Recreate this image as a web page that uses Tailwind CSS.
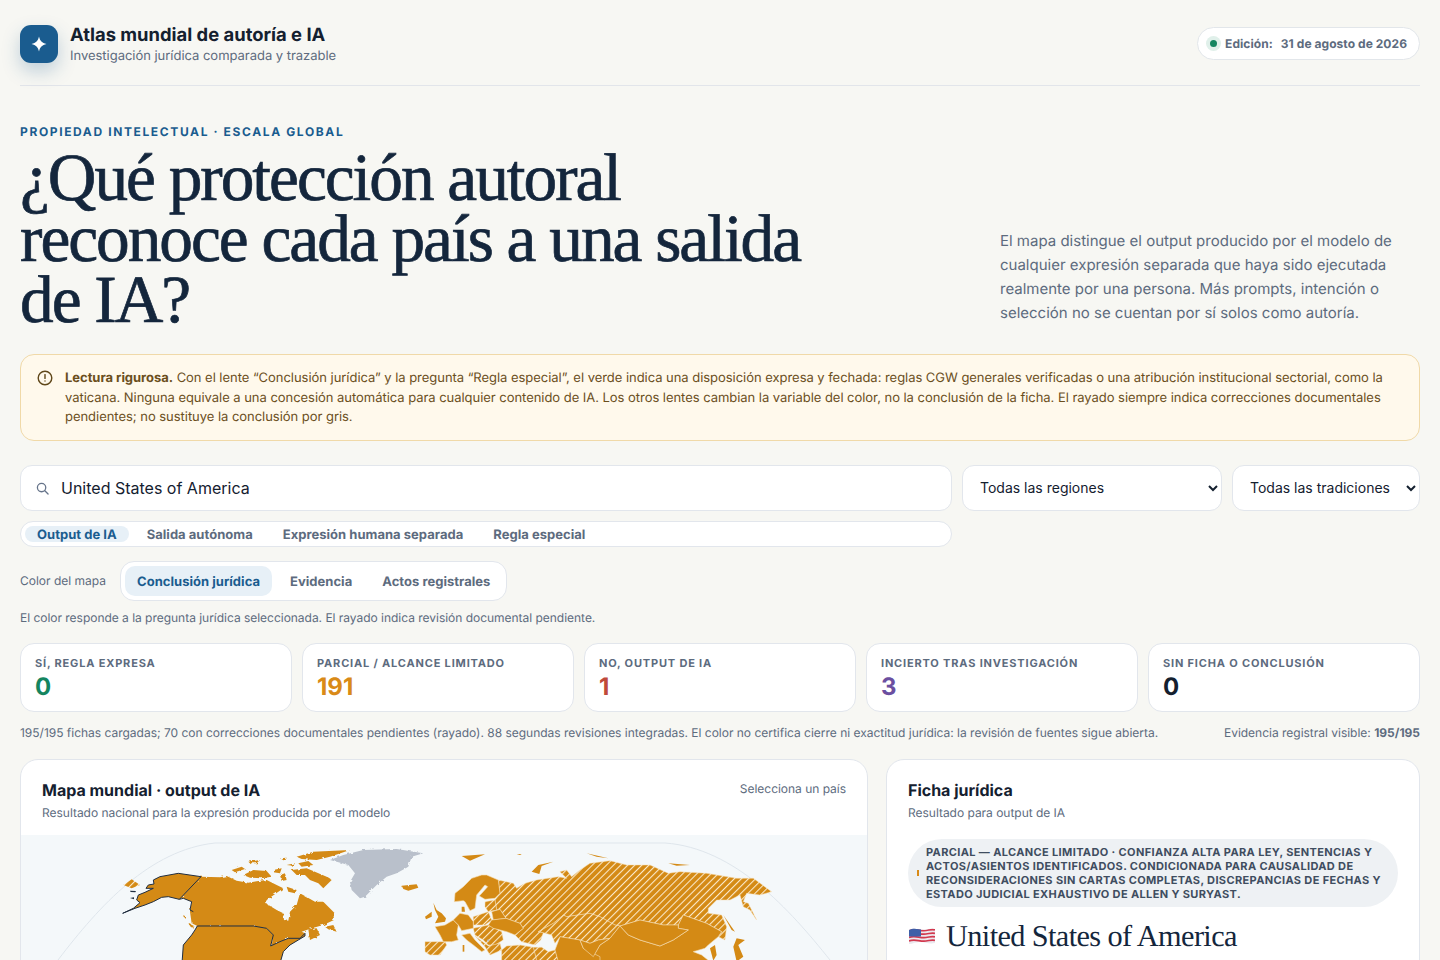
<!DOCTYPE html>
<html lang="es">
<head>
  <meta charset="UTF-8" />
  <title>Atlas mundial de autoría e IA</title>
  <script src="https://cdn.jsdelivr.net/npm/@tailwindcss/browser@4"></script>
</head>
<body class="bg-[#f7f7f3] h-[960px] overflow-hidden font-['Inter',sans-serif] [text-rendering:geometricPrecision] text-[#14202f]">
  <div class="px-5">
    <!-- header -->
    <header class="h-[86px] flex items-center justify-between border-b border-[#e2e5ea] pt-[2px]">
      <div class="flex items-center gap-3">
        <div class="w-[38px] h-[38px] rounded-[11px] bg-[#1a5c8f] flex items-center justify-center shadow-[0_8px_18px_rgba(26,92,143,0.25)]">
          <svg width="16" height="16" viewBox="0 0 16 16" fill="#fff"><path d="M8 .5C9 5 11 7 15.5 8 11 9 9 11 8 15.5 7 11 5 9 .5 8 5 7 7 5 8 .5Z"/></svg>
        </div>
        <div>
          <div class="text-[18.4px] leading-[24px] font-bold">Atlas mundial de autoría e IA</div>
          <div class="text-[13px] leading-[18px] tracking-[-0.002em] text-[#5d6b7e]">Investigación jurídica comparada y trazable</div>
        </div>
      </div>
      <div class="h-[33px] flex items-center gap-[4px] rounded-full border border-[#e2e6ea] bg-white pl-[8px] pr-[12px] text-[12px] font-bold tracking-[0.005em] text-[#5d6b7e]">
        <span class="w-[15px] h-[15px] rounded-full bg-[#e0f0ea] flex items-center justify-center"><span class="w-[7px] h-[7px] rounded-full bg-[#14855f]"></span></span>
        <span class="mr-[4px]">Edición:</span>
        <span>31 de agosto de 2026</span>
      </div>
    </header>

    <!-- hero -->
    <section class="pt-[38px] grid grid-cols-[980px_1fr] items-end">
      <div>
        <div class="text-[12px] leading-[16px] font-bold tracking-[0.135em] text-[#1a5c8f]">PROPIEDAD INTELECTUAL · ESCALA GLOBAL</div>
        <h1 class="mt-[7px] w-[820px] font-['Liberation_Serif',serif] font-normal text-[67.3px] leading-[61px] tracking-[-0.03em] [-webkit-text-stroke:0.7px_#14263c] text-[#14263c]">¿Qué protección autoral reconoce cada país a una salida de IA?</h1>
      </div>
      <p class="text-[15px] leading-[24px] text-[#5d6b7e] pb-[5px]">El mapa distingue el output producido por el modelo de cualquier expresión separada que haya sido ejecutada realmente por una persona. Más prompts, intención o selección no se cuentan por sí solos como autoría.</p>
    </section>

    <!-- notice -->
    <div class="mt-[24px] h-[87px] flex gap-[12px] rounded-[14px] border border-[#f0d9a8] bg-[#fff9ec] pl-[16px] pr-[20px] pt-[14px] text-[13px] leading-[19.5px] tracking-[-0.003em] text-[#6b4f1d]">
      <svg class="mt-[1px] shrink-0" width="16" height="16" viewBox="0 0 16 16" fill="none" stroke="#5f4719" stroke-width="1.4" stroke-linecap="round"><circle cx="8" cy="8" r="6.8"/><path d="M8 4.6V8.4"/><path d="M8 11V11.1"/></svg>
      <p><strong class="font-bold">Lectura rigurosa.</strong> Con el lente “Conclusión jurídica” y la pregunta “Regla especial”, el verde indica una disposición expresa y fechada: reglas CGW generales verificadas o una atribución institucional sectorial, como la vaticana. Ninguna equivale a una concesión automática para cualquier contenido de IA. Los otros lentes cambian la variable del color, no la conclusión de la ficha. El rayado siempre indica correcciones documentales pendientes; no sustituye la conclusión por gris.</p>
    </div>

    <!-- filters -->
    <div class="mt-[24px] flex gap-[10px]">
      <div class="w-[932px] h-[46px] flex items-center gap-[12px] rounded-[12px] border border-[#e2e6ec] bg-white pl-[15px]">
        <svg width="13" height="13" viewBox="0 0 14 14" fill="none" stroke="#66748a" stroke-width="1.4" stroke-linecap="round"><circle cx="6" cy="6" r="4.5"/><path d="M9.5 9.5L13 13"/></svg>
        <input class="flex-1 bg-transparent outline-none text-[16px] text-[#14202f]" value="United States of America" />
      </div>
      <select class="w-[260px] h-[46px] rounded-[12px] border border-[#e2e6ec] bg-white pl-[13px] pr-[8px] pb-[2px] text-[14px] text-[#14202f]"><option>Todas las regiones</option></select>
      <select class="w-[188px] h-[46px] rounded-[12px] border border-[#e2e6ec] bg-white pl-[13px] pr-[8px] pb-[2px] text-[14px] text-[#14202f]"><option>Todas las tradiciones</option></select>
    </div>

    <div class="mt-[10px] w-[932px] h-[26px] flex items-center gap-[6px] rounded-full border border-[#e2e6ec] bg-white pl-[4px] text-[13px] font-bold tracking-[0.002em] text-[#5d6b7e]">
      <span class="h-[16px] leading-[18px] px-[12px] rounded-full bg-[#e7f0f7] text-[#1a5c8f]">Output de IA</span>
      <span class="h-[16px] leading-[18px] px-[12px]">Salida autónoma</span>
      <span class="h-[16px] leading-[18px] px-[12px]">Expresión humana separada</span>
      <span class="h-[16px] leading-[18px] px-[12px]">Regla especial</span>
    </div>

    <div class="mt-[14px] flex items-center gap-[14px]">
      <span class="text-[12px] text-[#5d6b7e]">Color del mapa</span>
      <div class="h-[40px] flex items-center gap-[6px] rounded-[14px] border border-[#e2e6ec] bg-white px-[4px] text-[13px] font-bold tracking-[0.002em] text-[#5d6b7e]">
        <span class="h-[30px] leading-[32px] px-[12px] rounded-[10px] bg-[#e7f0f7] text-[#1a5c8f]">Conclusión jurídica</span>
        <span class="h-[30px] leading-[32px] px-[12px]">Evidencia</span>
        <span class="h-[30px] leading-[32px] px-[12px]">Actos registrales</span>
      </div>
    </div>

    <p class="mt-[9px] text-[12px] leading-[16px] tracking-[-0.002em] text-[#5d6b7e]">El color responde a la pregunta jurídica seleccionada. El rayado indica revisión documental pendiente.</p>

    <!-- stats -->
    <div class="mt-[17px] grid grid-cols-5 gap-[10px]">
      <div class="h-[69px] rounded-[14px] border border-[#e2e6ec] bg-white px-[14px] pt-[12px]">
        <div class="text-[11px] leading-[14px] font-bold tracking-[0.075em] text-[#5d6b7e]">SÍ, REGLA EXPRESA</div>
        <div class="mt-[2px] text-[24px] leading-[30px] font-bold text-[#14855f]">0</div>
      </div>
      <div class="h-[69px] rounded-[14px] border border-[#e2e6ec] bg-white px-[14px] pt-[12px]">
        <div class="text-[11px] leading-[14px] font-bold tracking-[0.075em] text-[#5d6b7e]">PARCIAL / ALCANCE LIMITADO</div>
        <div class="mt-[2px] text-[24px] leading-[30px] font-bold text-[#d98a17]">191</div>
      </div>
      <div class="h-[69px] rounded-[14px] border border-[#e2e6ec] bg-white px-[14px] pt-[12px]">
        <div class="text-[11px] leading-[14px] font-bold tracking-[0.075em] text-[#5d6b7e]">NO, OUTPUT DE IA</div>
        <div class="mt-[2px] text-[24px] leading-[30px] font-bold text-[#bf4a3a]">1</div>
      </div>
      <div class="h-[69px] rounded-[14px] border border-[#e2e6ec] bg-white px-[14px] pt-[12px]">
        <div class="text-[11px] leading-[14px] font-bold tracking-[0.075em] text-[#5d6b7e]">INCIERTO TRAS INVESTIGACIÓN</div>
        <div class="mt-[2px] text-[24px] leading-[30px] font-bold text-[#6b4fa0]">3</div>
      </div>
      <div class="h-[69px] rounded-[14px] border border-[#e2e6ec] bg-white px-[14px] pt-[12px]">
        <div class="text-[11px] leading-[14px] font-bold tracking-[0.075em] text-[#5d6b7e]">SIN FICHA O CONCLUSIÓN</div>
        <div class="mt-[2px] text-[24px] leading-[30px] font-bold text-[#14202f]">0</div>
      </div>
    </div>

    <div class="mt-[13px] flex justify-between text-[12px] leading-[16px] tracking-[-0.001em] text-[#5d6b7e]">
      <span>195/195 fichas cargadas; 70 con correcciones documentales pendientes (rayado). 88 segundas revisiones integradas. El color no certifica cierre ni exactitud jurídica: la revisión de fuentes sigue abierta.</span>
      <span>Evidencia registral visible: <strong class="font-bold">195/195</strong></span>
    </div>

    <!-- panels -->
    <div class="mt-[18px] grid grid-cols-[848px_534px] gap-[18px]">
      <section class="h-[400px] rounded-[18px] border border-[#e2e6ec] bg-white overflow-hidden">
        <div class="h-[75px] flex justify-between px-[21px] pt-[20px]">
          <div>
            <h2 class="text-[16px] leading-[20px] font-bold">Mapa mundial · output de IA</h2>
            <p class="mt-[5px] text-[12px] leading-[16px] tracking-[-0.002em] text-[#5d6b7e]">Resultado nacional para la expresión producida por el modelo</p>
          </div>
          <span class="text-[12px] leading-[18px] tracking-[-0.002em] text-[#5d6b7e]">Selecciona un país</span>
        </div>
        <svg class="block bg-[#f4f8fa]" width="846" height="325" viewBox="21 835 846 325">
          <defs>
            <pattern id="rayado" width="15" height="15" patternUnits="userSpaceOnUse" patternTransform="rotate(45)">
              <rect width="15" height="15" fill="#d48a15"/>
              <rect width="3.2" height="15" fill="#fbeacb"/>
            </pattern>
            <filter id="costa" x="-5%" y="-5%" width="110%" height="110%">
              <feTurbulence type="fractalNoise" baseFrequency="0.25" numOctaves="2" seed="4"/>
              <feDisplacementMap in="SourceGraphic" scale="3"/>
            </filter>
          </defs>
          <path d="M58 960C100 905 150 850 215 843L665 843C735 848 790 910 830 960" fill="none" stroke="#dfe6ec" stroke-width="1"/>

          <!-- arctic canada, greenland, iceland -->
          <g filter="url(#costa)">
            <g transform="translate(230 845) scale(.3333)">
              <path fill="#b9c0cb" d="M300 45L340 30L400 15L500 12L580 25L545 35L535 65L500 85L470 95L440 120L405 155L390 160L365 135L360 110L375 85L355 60L320 50Z"/>
              <g fill="#d48a15">
                <path d="M200 35L250 20L360 15L300 35L260 45L215 42Z"/>
                <path d="M40 90L70 75L110 78L125 95L95 100L60 98Z"/>
                <path d="M5 75L35 65L45 72L15 82Z"/>
                <path d="M55 50L90 45L80 55L60 55Z"/>
                <path d="M130 75L155 70L150 85L130 82Z"/>
                <path d="M150 40L170 38L165 48Z"/>
                <path d="M170 60L195 55L190 62Z"/>
                <path d="M205 55L235 48L250 60L215 65Z"/>
                <path d="M185 75L230 70L290 95L305 105L280 130L265 115L240 105L225 90L200 90Z"/>
                <path d="M150 90L165 85L170 105L155 108Z"/>
                <path d="M170 125L200 135L195 145L175 140Z"/>
                <path d="M515 122L560 118L565 128L535 137L520 132Z"/>
              </g>
            </g>
            <g transform="translate(120 860) scale(.3333)">
              <path fill="#d48a15" d="M243 50L300 52L320 48L350 62L385 68L420 62L440 60L470 75L490 85L440 120L437 130L470 150L490 160L492 180L505 182L510 155L530 135L540 100L585 125L610 125L640 155L642 180L610 195L575 205L545 215L555 220L540 235L505 235L480 245L455 258L460 225L440 205L400 198L232 198L215 190L210 155L215 125L190 115L178 118Z"/>
              <path fill="#d48a15" d="M615 200L640 195L650 215L625 208Z"/>
              <path fill="#d48a15" d="M565 208L590 205L600 225L570 240Z"/>
              <path fill="#d48a15" d="M190 165L198 170L198 176L191 172Z"/>
              <path fill="#d48a15" d="M205 190L222 198L225 208L212 200Z"/>
            </g>
          </g>

          <!-- alaska and lower 48, selected -->
          <g transform="translate(120 860) scale(.3333)">
            <path fill="url(#rayado)" d="M10 75L35 58L60 75L35 85Z"/>
            <path fill="#1f2d40" d="M30 92L48 93L46 97L32 96Z"/>
            <path fill="#1f2d40" d="M30 114L42 112L42 118Z"/>
            <g stroke="#1f2d40" stroke-width="3" stroke-linejoin="round">
              <path fill="#d48a15" d="M8 160L45 145L75 135L100 125L125 112L145 110L178 118L243 50L175 40L120 50L100 60L102 72L85 75L78 85L100 85L75 97L55 105L50 120L60 128L40 145Z"/>
              <path fill="none" d="M178 118L190 115L215 125L210 150L220 155"/>
              <path fill="#d48a15" d="M232 198L400 198L440 205L460 225L452 258L480 245L505 235L540 235L555 220L555 228L535 240L510 255L490 275L480 310L186 310L190 255L215 225L225 210Z"/>
            </g>
          </g>

          <!-- eurasia -->
          <g transform="translate(420 860) scale(.3333)">
            <g fill="url(#rayado)" stroke="#f6dfb5" stroke-width="1.5">
              <path d="M235 60L280 70L290 85L315 70L350 60L415 50L440 55L420 35L440 30L455 50L480 30L510 10L570 2L620 15L690 15L745 40L780 35L860 40L950 55L1000 55L1055 95L1020 105L980 100L970 125L985 130L1010 180L990 150L970 140L960 105L930 120L890 120L865 145L865 160L905 165L920 200L915 240L895 230L905 215L860 190L790 165L775 195L730 195L660 180L600 198L585 195L540 170L510 160L440 170L430 165L400 190L355 215L370 218L362 240L345 255L305 245L285 225L310 205L300 190L258 175L240 148L230 150L225 120L240 100Z"/>
              <path d="M510 160L540 170L585 195L600 198L570 235L535 240L510 250L480 240L420 230L405 250L395 225L370 218L355 215L400 190L430 165L440 170Z"/>
              <path d="M340 262L365 262L385 275L405 270L415 302L350 302Z"/>
              <path d="M245 270L260 258L300 255L340 262L350 302L245 302Z"/>
              <path d="M160 170L205 155L215 180L195 195L160 195Z"/>
              <path d="M195 125L225 120L230 150L205 155L195 140Z"/>
              <path d="M160 205L205 195L245 215L250 240L225 255L205 255L190 240L165 225Z"/>
              <path d="M165 228L205 258L240 250L245 270L210 285L195 260Z"/>
              <path d="M15 245L75 245L80 255L60 285L30 285L15 275Z"/>
            </g>
            <g fill="#d48a15" stroke="#f6dfb5" stroke-width="1.8">
              <path d="M600 198L625 225L660 240L720 258L760 240L805 210L775 205L775 195L790 165L860 190L905 215L895 230L865 255L855 265L820 275L845 285L870 305L510 305L540 255L570 235Z"/>
              <path d="M600 198L660 180L730 195L775 195L775 205L805 210L760 240L720 258L660 240L625 225Z"/>
              <path d="M405 270L420 230L480 240L490 265L540 290L540 305L415 305Z"/>
              <path d="M480 240L510 250L535 240L570 235L540 255L520 290L490 265Z"/>
              <path d="M45 200L75 195L100 180L115 195L110 225L115 240L95 245L70 245L60 225Z"/>
              <path d="M100 180L120 160L145 165L160 185L160 205L125 212L115 195Z"/>
              <path d="M215 155L240 148L258 175L220 180Z"/>
              <path d="M215 180L258 175L300 190L310 205L285 225L260 215L220 205L205 195Z"/>
              <path d="M125 225L150 220L165 240L195 270L185 275L160 255L140 240Z"/>
              <path d="M103 125L105 100L130 80L155 55L185 45L200 45L235 60L240 100L225 115L195 118L178 108L203 80L195 75L170 105L165 145L150 152L135 125L130 122Z"/>
            </g>
            <g fill="#d48a15">
              <path d="M40 128L50 150L65 160L78 175L75 185L45 190L55 170L45 150Z"/>
              <path d="M15 170L35 155L35 170L18 178Z"/>
              <path d="M125 140L133 140L135 155L125 155Z"/>
              <path d="M128 255L133 255L133 275L128 275Z"/>
              <path d="M335 35L355 15L400 5L365 18L358 42Z"/>
              <path d="M125 -12L195 -17L150 2Z"/>
              <path d="M290 -18L305 -18L300 -15Z"/>
              <path d="M500 -20L565 -5L530 -10Z"/>
              <path d="M745 10L810 15L770 17Z"/>
              <path d="M910 165L945 215L935 210Z"/>
              <path d="M870 265L885 255L890 285L880 302Z"/>
              <path d="M950 235L975 240L955 255L970 290L950 305L940 260Z"/>
            </g>
            <path d="M200 240L208 238L206 246Z" fill="#b9c0cb"/>
          </g>
        </svg>
      </section>

      <section class="h-[400px] rounded-[18px] border border-[#e2e6ec] bg-white px-[21px] pt-[20px]">
        <h2 class="text-[16px] leading-[20px] font-bold">Ficha jurídica</h2>
        <p class="mt-[5px] text-[12px] leading-[16px] tracking-[-0.002em] text-[#5d6b7e]">Resultado para output de IA</p>
        <div class="mt-[18px] h-[68px] flex items-center gap-[7px] rounded-[34px] bg-[#eef1f4] pl-[9px] pr-[12px]">
          <span class="w-[2px] h-[6px] shrink-0 bg-[#d98a17]"></span>
          <span class="text-[11px] leading-[14px] font-bold tracking-[0.033em] text-[#3f4d60]">PARCIAL — ALCANCE LIMITADO · CONFIANZA ALTA PARA LEY, SENTENCIAS Y ACTOS/ASIENTOS IDENTIFICADOS. CONDICIONADA PARA CAUSALIDAD DE RECONSIDERACIONES SIN CARTAS COMPLETAS, DISCREPANCIAS DE FECHAS Y ESTADO JUDICIAL EXHAUSTIVO DE ALLEN Y SURYAST.</span>
        </div>
        <div class="mt-[11px] ml-[1px] flex items-center gap-[11px]">
          <svg width="26" height="18" viewBox="0 0 26 18">
            <defs><clipPath id="ondas"><path d="M0 3C6 0 11 3.5 17 2.5S24 1 26 2V16C20 17.5 15 14.5 9 15.2S3 17 0 17Z"/></clipPath></defs>
            <g clip-path="url(#ondas)">
              <rect width="26" height="18" fill="#ebe8ee"/>
              <path d="M0 3.5C6 1 11 4.5 17 3.5S24 2 26 3M0 7C6 4.5 11 8 17 7S24 5.5 26 6.5M0 10.5C6 8 11 11.5 17 10.5S24 9 26 10M0 14C6 11.5 11 15 17 14S24 12.5 26 13.5" fill="none" stroke="#d2384e" stroke-width="1.7"/>
              <rect width="12" height="9.5" fill="#3e5fa8"/>
            </g>
          </svg>
          <span class="font-['Liberation_Serif',serif] text-[30.3px] leading-[36px] tracking-[-0.02em] text-[#14263c]">United States of America</span>
        </div>
      </section>
    </div>
  </div>
</body>
</html>
